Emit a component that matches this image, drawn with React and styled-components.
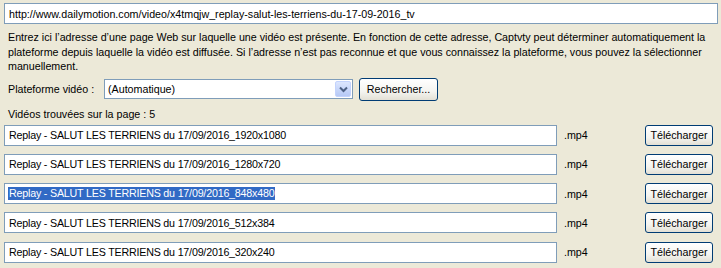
import React from "react";
import styled, { createGlobalStyle } from "styled-components";

const Global = createGlobalStyle`
  html, body { margin: 0; padding: 0; background: #ECE9D8; }
  body { font-family: "Liberation Sans", Arial, sans-serif; font-size: 10.7px; color: #000; }
`;

const Window = styled.div`
  width: 721px;
  height: 268px;
  box-sizing: border-box;
  padding: 3px 3px 0 4px;
  display: flex;
  flex-direction: column;
  overflow: hidden;
  background: #ECE9D8;
`;

const TextBox = styled.div`
  box-sizing: border-box;
  height: 21px;
  width: ${(p) => p.$width || "auto"};
  flex: none;
  background: #fff;
  border: 1px solid #7F9DB9;
  padding: 0 3px 0 ${(p) => p.$pl || 3}px;
  letter-spacing: ${(p) => p.$ls || 0}px;
  display: flex;
  align-items: center;
  white-space: nowrap;
  overflow: hidden;
`;

const Paragraph = styled.p`
  margin: 6px 0 0 4px;
  line-height: 14.5px;
  white-space: nowrap;
`;

const PlatformRow = styled.div`
  margin-top: 4px;
  height: 23px;
  display: flex;
  align-items: center;
`;

const Label = styled.span`
  padding-left: 4px;
  width: 100px;
  box-sizing: border-box;
  white-space: nowrap;
`;

const Select = styled.div`
  box-sizing: border-box;
  width: 249px;
  height: 20px;
  background: #fff;
  border: 1px solid #7F9DB9;
  display: flex;
  align-items: center;
  padding: 0 1px 0 3px;
`;

const SelectText = styled.span`
  flex: 1;
`;

const ArrowBtn = styled.div`
  width: 16px;
  height: 16px;
  box-sizing: border-box;
  border: 1px solid #C3D3FD;
  border-radius: 2px;
  background: linear-gradient(#DCE6FE, #B6C9F6);
  display: flex;
  align-items: center;
  justify-content: center;
`;

const XPButton = styled.button`
  box-sizing: border-box;
  height: ${(p) => p.$h || 21}px;
  width: ${(p) => p.$w}px;
  margin-left: ${(p) => p.$ml || 0}px;
  border: 1px solid #003C74;
  border-radius: 3px;
  background: linear-gradient(#FFFFFF 0%, #F4F4F0 60%, #E3E0D5 100%);
  font-family: "Liberation Sans", Arial, sans-serif;
  font-size: 10.7px;
  color: #000;
  padding: 0;
  display: flex;
  align-items: center;
  justify-content: center;
  flex: none;
`;

const Found = styled.div`
  margin: 6px 0 0 4px;
  line-height: 14px;
`;

const List = styled.div`
  margin-top: 4px;
  display: flex;
  flex-direction: column;
  gap: 8.25px;
`;

const Row = styled.div`
  height: 21px;
  display: flex;
  align-items: center;
`;

const Ext = styled.span`
  flex: 1;
  padding-left: 7px;
`;

const Spacer = styled.span`
  width: 5px;
  flex: none;
`;

const Selected = styled.span`
  background: #316AC5;
  color: #fff;
  margin-left: -1px;
  padding: 0 1px;
  line-height: 13px;
`;

const videos = ["1920x1080", "1280x720", "848x480", "512x384", "320x240"];

export default function App() {
  return (
    <>
      <Global />
      <Window>
        <TextBox $pl={4}>http://www.dailymotion.com/video/x4tmqjw_replay-salut-les-terriens-du-17-09-2016_tv</TextBox>
        <Paragraph>
          Entrez ici l’adresse d’une page Web sur laquelle une vidéo est présente. En fonction de cette adresse, Captvty peut déterminer automatiquement la
          <br />
          plateforme depuis laquelle la vidéo est diffusée. Si l’adresse n’est pas reconnue et que vous connaissez la plateforme, vous pouvez la sélectionner
          <br />
          manuellement.
        </Paragraph>
        <PlatformRow>
          <Label>Plateforme vidéo :</Label>
          <Select>
            <SelectText>(Automatique)</SelectText>
            <ArrowBtn>
              <svg width="9" height="7" viewBox="0 0 9 7">
                <path d="M1 1.5 L4.5 5 L8 1.5" fill="none" stroke="#4D6185" strokeWidth="2" />
              </svg>
            </ArrowBtn>
          </Select>
          <XPButton $w={79} $h={23} $ml={6}>Rechercher...</XPButton>
        </PlatformRow>
        <Found>Vidéos trouvées sur la page : 5</Found>
        <List>
          {videos.map((v, i) => {
            const name = `Replay - SALUT LES TERRIENS du 17/09/2016_${v}`;
            return (
              <Row key={v}>
                <TextBox $width="553px" $pl={4} $ls={-0.2}>
                  {i === 2 ? <Selected>{name}</Selected> : name}
                </TextBox>
                <Ext>.mp4</Ext>
                <XPButton $w={68}>Télécharger</XPButton>
                <Spacer />
              </Row>
            );
          })}
        </List>
      </Window>
    </>
  );
}
